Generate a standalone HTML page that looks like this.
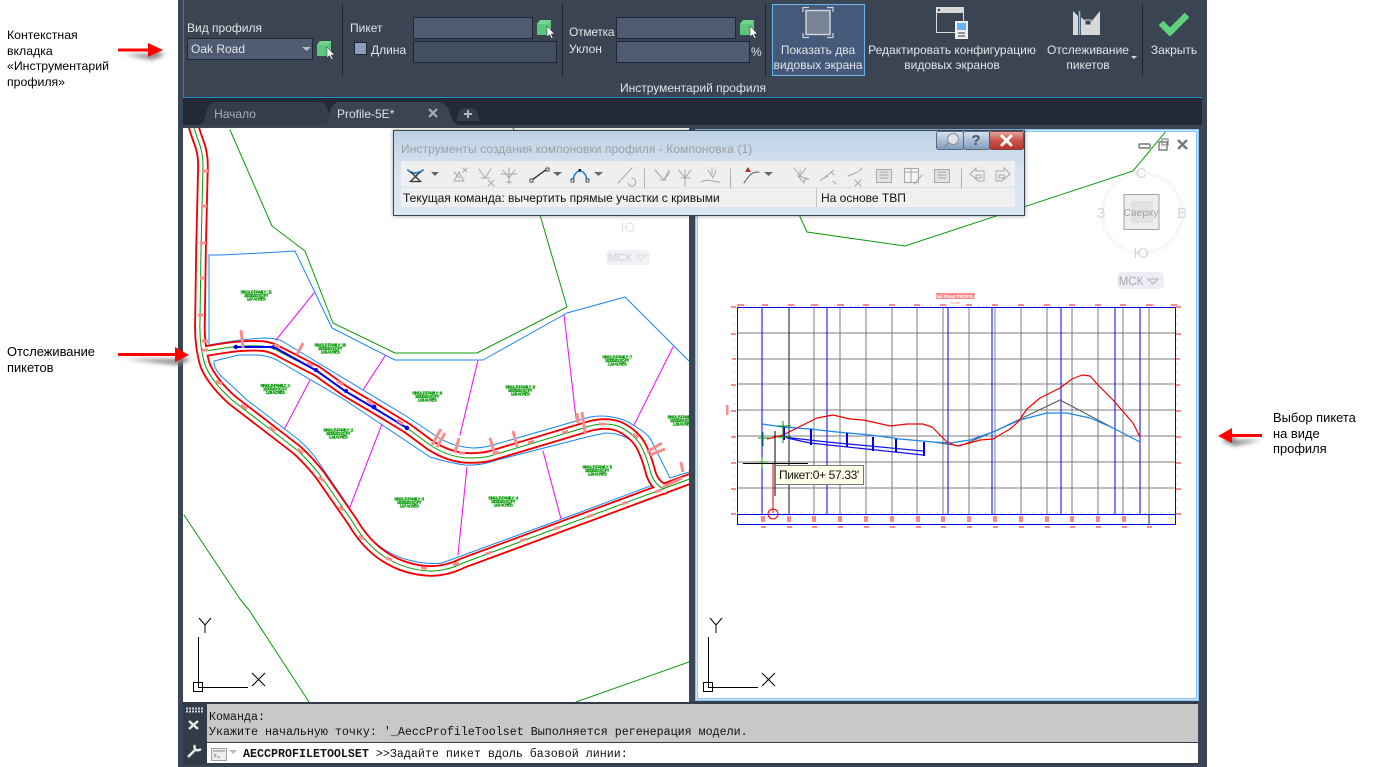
<!DOCTYPE html>
<html lang="ru"><head><meta charset="utf-8"><title>Инструментарий профиля</title>
<style>
html,body{margin:0;padding:0;background:#fff;width:1384px;height:767px;overflow:hidden}
body{position:relative;font-family:"Liberation Sans","Noto Sans CJK SC",sans-serif}
.a{position:absolute}
.t{position:absolute;white-space:nowrap;font-size:12px;line-height:14px}
.n{color:#000}
.r{color:#e2e4e8}
.c{text-align:center;transform:translateX(-50%)}
.m{position:absolute;white-space:pre;font-family:"Liberation Mono",monospace;font-size:11.67px;line-height:14px;color:#111}
svg{position:absolute;left:0;top:0}
.pl text{letter-spacing:-.5px}
</style></head><body>

<!-- window frame -->
<div class="a" style="left:178px;top:0;width:1029px;height:767px;background:#3a4556"></div>
<div class="a" style="left:183px;top:0;width:1019px;height:97px;background:#3b4453"></div>
<div class="a" style="left:183px;top:0;width:1px;height:97px;background:#1d8ec8"></div>
<div class="a" style="left:183px;top:97px;width:1019px;height:1px;background:#1d8ec8"></div>
<div class="a" style="left:183px;top:98px;width:1019px;height:27px;background:#232a36"></div>

<!-- tabs -->
<svg width="1384" height="130" style="z-index:1">
<path d="M200 125C207 124 204 102 216 102H318C326 102 327 108 329 114L333 125Z" fill="#353d4b"/>
<path d="M326 125C330 118 328 102 340 102H438C446 102 449 110 451 116C453 122 456 125 460 125Z" fill="#3b4453"/>
<path d="M457 121C459 111 459 108 466 108H472C477 108 478 114 479 121Z" fill="#353d4b"/>
<path d="M468 110V118M464 114H472" stroke="#aeb3bb" stroke-width="2"/>
<path d="M429 109L437 117M437 109L429 117" stroke="#aeb1b7" stroke-width="2"/>
</svg>

<!-- viewport backgrounds -->
<div class="a" style="left:183px;top:128px;width:506px;height:574px;background:#fff"></div>
<div class="a" style="left:695px;top:129px;width:504px;height:572px;background:#fff;box-sizing:border-box;border:3px solid #8cc3f5;outline:1px solid #d4e8fb;outline-offset:-2px"></div>

<!-- drawings -->
<svg width="1384" height="767" style="z-index:2" fill="none">
<defs>
<clipPath id="l"><rect x="183" y="128" width="506" height="574"/></clipPath>
<clipPath id="rv"><rect x="698" y="132" width="498" height="566"/></clipPath>
</defs>
<g clip-path="url(#l)" stroke-linejoin="round" stroke-linecap="round">
 <!-- green boundaries -->
 <g stroke="#0a9a0a" stroke-width="1">
 <path d="M230 130L272 226L305 251L333 323L395 353H477L567 307L540 215"/>
 <path d="M184 515L240 599L249 610L309 702"/>
 <path d="M576 702L689 662"/>
 <path d="M513 128L517 135"/>
 </g>
 <!-- blue lots -->
 <g stroke="#1a86f0" stroke-width="1">
 <path d="M209 345L209 255L220 255L262 253L295 251L332 328L395 360H483L567 313L625 297L689 361"/>
 <path d="M209 345Q240 339 265 338Q275 338 282 341L406 416L430 432Q450 447 473 448Q483 448 493 445L590 417Q602 415 612 417Q625 419 633 425Q645 432 650 438L670 478L689 472"/>
 <path d="M653 485L645 460Q640 445 630 440Q620 433 605 433L587 437L497 460Q480 466 465 465Q450 463 430 457L345 400L282 363Q270 355 255 355L239 355L214 361Q213 366 220 375L247 400L299 440Q308 448 315 457L349 507Q358 525 369 537Q385 553 405 559Q425 565 442 563L562 519Z"/>
 </g>
 <!-- magenta -->
 <g stroke="#f01af0" stroke-width="1.1">
 <path d="M314 293L276 340M310 380L285 428M385 356L363 390M382 424L350 507M478 360L460 435M564 315L576 418M673 347L634 425M467 467L458 555M543 451L561 519"/>
 </g>
 <!-- road -->
 <g stroke="#f40000" stroke-width="11.500">
  <path d="M194 128L198 140Q203 152 203 165L201 250L200 320Q199 345 205 365Q212 382 232 400L297 450Q310 462 320 475L352 521Q366 545 385 557Q405 570 430 571Q447 571 463 563L687 480L695 477"/>
  <path d="M206 351L225 348Q245 345 262 346Q272 347 280 352L317 371L345 391L374 408L407 428L430 445Q450 458 470 458Q482 458 490 456L590 426Q605 422 618 426Q632 432 640 444Q646 455 650 470Q653 484 664 489"/>
 </g>
 <g stroke="#fff" stroke-width="7.800">
  <path d="M194 128L198 140Q203 152 203 165L201 250L200 320Q199 345 205 365Q212 382 232 400L297 450Q310 462 320 475L352 521Q366 545 385 557Q405 570 430 571Q447 571 463 563L687 480L695 477"/>
  <path d="M206 351L225 348Q245 345 262 346Q272 347 280 352L317 371L345 391L374 408L407 428L430 445Q450 458 470 458Q482 458 490 456L590 426Q605 422 618 426Q632 432 640 444Q646 455 650 470Q653 484 664 489"/>
 </g>
 <g stroke="#0a9a0a" stroke-width="1">
  <path d="M194 128L198 140Q203 152 203 165L201 250L200 320Q199 345 205 365Q212 382 232 400L297 450Q310 462 320 475L352 521Q366 545 385 557Q405 570 430 571Q447 571 463 563L687 480L695 477"/>
  <path d="M206 351L225 348Q245 345 262 346Q272 347 280 352L317 371L345 391L374 408L407 428L430 445Q450 458 470 458Q482 458 490 456L590 426Q605 422 618 426Q632 432 640 444Q646 455 650 470Q653 484 664 489"/>
 </g>
 <!-- selected alignment -->
 <path d="M234 347H274L317 371L345 391L374 408L407 428" stroke="#0000e6" stroke-width="2"/>
 <g fill="#0000e6" stroke="none">
  <circle cx="236" cy="347" r="2.2"/><circle cx="274" cy="347" r="2.2"/><circle cx="316" cy="370" r="2"/><circle cx="346" cy="391" r="2"/><circle cx="374" cy="407" r="2.4"/><circle cx="407" cy="428" r="2.2"/>
 </g>
 <!-- pink ticks -->
 <g stroke="#f98c8c" stroke-width="3" stroke-linecap="butt">
  <path d="M241 330L243 348M303 343L297 355M441 429L432 445M445 433L437 447M459 438L455 453M490 438L495 455M513 431L517 447M577 413L578 423M582 412L585 433M662 443L647 452M665 449L650 455M681 462L683 472M682 478L663 487"/>
  <path d="M202 171h6M201 206h6M200 243h6M200 278h5M198 315h5M202 341h6M202 350h6M216 381l6 3M241 405l6 4M269 427l6 4M297 449l6 4M319 477l5 4M339 507l5 3M359 536l5 3M386 558l6 2M421 568h6M453 565l6 -2M486 554l6 -2M520 541l6 -2M554 529l6 -2M587 517l6 -2M622 504l6 -2M655 492l6 -2M274 345l6 2M307 362l6 4M337 381l6 4M367 400l6 4M397 420l6 4M459 453h6M493 454l6 -2M528 443l6 -2M562 433l6 -2M599 424l6 0M633 434l5 4"/>
 </g>
 <!-- parcel labels -->
 <g class="pl" fill="#0a9a0a" stroke="#0a9a0a" stroke-width=".25" font-family="Liberation Sans, sans-serif" font-size="4.2" font-weight="700" text-anchor="middle">
  <text x="256" y="293.500">SINGLE-FAMILY : 11</text><text x="256" y="297">10000.00 SQ FT</text><text x="256" y="300.500">1.07 ACRES</text>
  <text x="330" y="346.500">SINGLE-FAMILY : 10</text><text x="330" y="350">10000.00 SQ FT</text><text x="330" y="353.500">1.08 ACRES</text>
  <text x="275" y="387">SINGLE-FAMILY : 1</text><text x="275" y="390.500">10000.00 SQ FT</text><text x="275" y="394">1.08 ACRES</text>
  <text x="427" y="394.500">SINGLE-FAMILY : 9</text><text x="427" y="398">10000.00 SQ FT</text><text x="427" y="401.500">1.08 ACRES</text>
  <text x="338" y="431.500">SINGLE-FAMILY : 2</text><text x="338" y="435">10000.00 SQ FT</text><text x="338" y="438.500">1.14 ACRES</text>
  <text x="520" y="388.500">SINGLE-FAMILY : 8</text><text x="520" y="392">10000.00 SQ FT</text><text x="520" y="395.500">1.09 ACRES</text>
  <text x="617" y="358.500">SINGLE-FAMILY : 7</text><text x="617" y="362">10000.00 SQ FT</text><text x="617" y="365.500">1.14 ACRES</text>
  <text x="597" y="468.500">SINGLE-FAMILY : 5</text><text x="597" y="472">10000.00 SQ FT</text><text x="597" y="475.500">1.20 ACRES</text>
  <text x="503" y="499.500">SINGLE-FAMILY : 4</text><text x="503" y="503">10000.00 SQ FT</text><text x="503" y="506.500">1.02 ACRES</text>
  <text x="409" y="500.500">SINGLE-FAMILY : 3</text><text x="409" y="504">10000.00 SQ FT</text><text x="409" y="507.500">1.07 ACRES</text>
  <text x="682" y="418.500">SINGLE-FAMILY : 6</text><text x="682" y="422">10000.00 SQ FT</text><text x="682" y="425.500">1.18 ACRES</text>
 </g>
 <!-- ghost viewcube -->
 <text x="628" y="232" font-family="Liberation Sans, sans-serif" font-size="14" fill="#e4e4e4" stroke="none" text-anchor="middle">Ю</text>
 <rect x="606" y="250" width="44" height="15" rx="4" fill="#f1f1f6" stroke="none"/>
 <text x="620" y="261" font-family="Liberation Sans, sans-serif" font-size="11" fill="#d0d0d6" stroke="none" text-anchor="middle">МСК</text>
 <path d="M636 255l5 5l5 -5z" stroke="#dcdce4"/>
</g>

<!-- UCS left -->
<g stroke="#000" stroke-width="1">
 <path d="M198.500 637V687.500H248M193.500 682.500h9v9h-9z"/>
 <path d="M199 618l6 7l6 -7M205 625v8M252 673l13 13M265 673l-13 13"/>
 <path d="M708.500 637V687.500H758M703.500 682.500h9v9h-9z"/>
 <path d="M710 618l6 7l6 -7M716 625v8M762 673l13 13M775 673l-13 13"/>
</g>

<g clip-path="url(#rv)">
 <path d="M797 210L807 232L905 246L1133 171L1167 130" stroke="#0a9a0a" stroke-width="1"/>
 <!-- viewcube -->
 <circle cx="1142" cy="213" r="40" stroke="#f8f8f8" stroke-width="4"/>
 <rect x="1124" y="194.500" width="35" height="35" fill="#eee" stroke="#a4a4a4" stroke-width="1"/>
 <rect x="1131" y="201" width="22" height="22" fill="#e2e2e4"/>
 <g font-family="Liberation Sans, sans-serif" fill="#d5d5d5" text-anchor="middle" font-size="15">
  <text x="1141" y="178">С</text><text x="1182" y="218">В</text><text x="1141" y="258">Ю</text><text x="1101" y="218">З</text>
 </g>
 <text x="1141" y="216" font-family="Liberation Sans, sans-serif" font-size="10.500" fill="#a0a0a0" text-anchor="middle">Сверху</text>
 <rect x="1117" y="272" width="47" height="17" rx="5" fill="#ededf5"/>
 <text x="1131" y="285" font-family="Liberation Sans, sans-serif" font-size="11.500" fill="#a6a6ae" text-anchor="middle">МСК</text>
 <path d="M1148 279l5 5l5 -5z" stroke="#b4b4bc"/>
 <!-- window controls -->
 <rect x="1139" y="144" width="11" height="4" rx="1" fill="#fff" stroke="#777" stroke-width="1.4"/>
 <rect x="1159" y="142" width="8" height="8" fill="#fff" stroke="#777" stroke-width="1.4"/>
 <rect x="1162" y="139" width="6" height="6" fill="none" stroke="#888" stroke-width="1.2"/>
 <path d="M1178 140l9 9M1187 140l-9 9" stroke="#777" stroke-width="2.4"/>
</g>

<!-- profile plot -->
<g stroke-width="1" shape-rendering="crispEdges">
 <g stroke="#7c7c7c">
  <path d="M737 333H1175M737 359H1175M737 384H1175M737 410H1175M737 436H1175M737 462H1175M737 488H1175"/>
  <path d="M814 307V514M840 307V514M866 307V514M892 307V514M917 307V514M943 307V514M969 307V514M995 307V514M1021 307V514M1047 307V514M1072 307V514M1098 307V514M1123 307V514M1149 307V514"/>
 </g>
 <path d="M789 307V514" stroke="#10104a" stroke-width="1"/>
 <g stroke="#0000f0">
  <path d="M762 307V514M827 307V514M948 307V514M992 307V514M1061 307V514M1115 307V514M1140 307V514"/>
  <path d="M737.500 307.500H1175.500V524.500H737.500ZM737 514.500H1175"/>
 </g>
 <path d="M1149 514V524" stroke="#222"/>
 <!-- axis ticks pink -->
 <g stroke="#fb8c8c">
  <path d="M734 307v207M1177 307v207" stroke-dasharray="1 7"/>
  <path d="M737 512H1175" stroke-dasharray="1 7" transform="translate(0 1)"/>
  <path d="M738 306H1175" stroke-dasharray="1 7"/>
 </g>
 <g fill="#fb8c8c" stroke="none">
  <rect x="737" y="304" width="7" height="2"/><rect x="762" y="304" width="6" height="2"/><rect x="788" y="304" width="6" height="2"/><rect x="811" y="304" width="7" height="2"/><rect x="837" y="304" width="7" height="2"/><rect x="863" y="304" width="6" height="2"/><rect x="889" y="304" width="6" height="2"/><rect x="914" y="304" width="6" height="2"/><rect x="940" y="304" width="6" height="2"/><rect x="966" y="304" width="6" height="2"/><rect x="992" y="304" width="6" height="2"/><rect x="1018" y="304" width="6" height="2"/><rect x="1044" y="304" width="6" height="2"/><rect x="1069" y="304" width="6" height="2"/><rect x="1095" y="304" width="6" height="2"/><rect x="1120" y="304" width="6" height="2"/><rect x="1146" y="304" width="7" height="2"/><rect x="1171" y="304" width="6" height="2"/>
  <rect x="731" y="306" width="5" height="2"/><rect x="731" y="333" width="5" height="2"/><rect x="732" y="358" width="4" height="2"/><rect x="731" y="384" width="5" height="2"/><rect x="731" y="410" width="5" height="2"/><rect x="731" y="436" width="5" height="2"/><rect x="731" y="462" width="5" height="2"/><rect x="731" y="488" width="5" height="2"/><rect x="731" y="513" width="5" height="2"/>
  <rect x="1176" y="306" width="5" height="2"/><rect x="1176" y="333" width="5" height="2"/><rect x="1176" y="358" width="4" height="2"/><rect x="1176" y="384" width="4" height="2"/><rect x="1176" y="410" width="5" height="2"/><rect x="1176" y="436" width="5" height="2"/><rect x="1176" y="462" width="5" height="2"/><rect x="1176" y="488" width="5" height="2"/><rect x="1176" y="513" width="5" height="2"/>
  <rect x="726" y="405" width="2.500" height="10"/>
  <rect x="761" y="516" width="4" height="6"/><rect x="787" y="516" width="4" height="6"/><rect x="812" y="516" width="4" height="6"/><rect x="838" y="516" width="4" height="6"/><rect x="864" y="516" width="4" height="6"/><rect x="890" y="516" width="4" height="6"/><rect x="916" y="516" width="4" height="6"/><rect x="941" y="516" width="4" height="6"/><rect x="967" y="516" width="4" height="6"/><rect x="993" y="516" width="4" height="6"/><rect x="1019" y="516" width="4" height="6"/><rect x="1045" y="516" width="4" height="6"/><rect x="1070" y="516" width="4" height="6"/><rect x="1096" y="516" width="4" height="6"/><rect x="1122" y="516" width="4" height="6"/>
  <rect x="761" y="526" width="5" height="2"/><rect x="787" y="526" width="5" height="2"/><rect x="812" y="526" width="5" height="2"/><rect x="838" y="526" width="5" height="2"/><rect x="864" y="526" width="5" height="2"/><rect x="890" y="526" width="5" height="2"/><rect x="916" y="526" width="5" height="2"/><rect x="941" y="526" width="5" height="2"/><rect x="967" y="526" width="5" height="2"/><rect x="993" y="526" width="5" height="2"/><rect x="1019" y="526" width="5" height="2"/><rect x="1045" y="526" width="5" height="2"/><rect x="1070" y="526" width="5" height="2"/><rect x="1096" y="526" width="5" height="2"/><rect x="1122" y="526" width="5" height="2"/><rect x="1147" y="526" width="5" height="2"/>
  <rect x="936" y="293" width="39" height="6"/>
 </g>
</g>
<text x="955.500" y="298" font-family="Liberation Sans, sans-serif" font-size="4.600" fill="#fff" text-anchor="middle" font-weight="700">Oak Road PROFILE</text>
<text x="955" y="304" font-family="Liberation Sans, sans-serif" font-size="4" fill="#fb8c8c" text-anchor="middle">Scale</text>
<g stroke-linejoin="round">
 <path d="M933 442L960 446L993 432L1060 400L1113 428" stroke="#555" stroke-width="1"/>
 <path d="M762 424L783 427L810 429L837 432L870 435L900 439L933 442L950 443L970 440L993 432L1020 420L1047 413L1067 413L1090 418L1113 428L1140 442" stroke="#1a86f0" stroke-width="1.2"/>
 <path d="M767 439L783 435L797 428L817 418L833 415L850 419L863 420L877 423L890 426L907 424L923 424L932 427L947 442L957 446L970 443L980 440L993 439L1010 429L1018 422L1027 409L1040 398L1060 388L1072 379L1082 375L1090 376L1098 385L1113 400L1133 423L1140 437" stroke="#f00000" stroke-width="1.2"/>
 <path d="M783 437L827 442L923 451M787 438L810 443L923 455" stroke="#1414e6" stroke-width="1.2"/>
 <path d="M784 427V440M811 429V445M847 433V447M873 437V451M896 439V452M924 442V456" stroke="#0000e6" stroke-width="2"/>
 <path d="M758 438H769M763 432V446M777 426L791 426M783 421V443M777 437H791M757 462H768M762 457V468" stroke="#0a9a0a" stroke-width="1"/>
 <path d="M773 463V513" stroke="#e00000" stroke-width="1"/>
 <circle cx="773" cy="514" r="5" stroke="#e00000" stroke-width="1"/>
 <path d="M775 431V496M743 463.500H808" stroke="#000" stroke-width="1"/>
</g>
<!-- arrows -->
<defs><filter id="b" x="-20%" y="-100%" width="140%" height="300%"><feGaussianBlur stdDeviation="2"/></filter></defs>
<g>
 <path d="M122 53H150V48L163 54L150 59Z" fill="#888" filter="url(#b)" transform="translate(2 1)"/>
 <path d="M118 48.500h31v3h-31z" fill="#f00"/><path d="M148 43L163 50L148 57Z" fill="#f00"/>
 <path d="M122 358H176V353L189 359L176 364Z" fill="#888" filter="url(#b)" transform="translate(2 1)"/>
 <path d="M118 353h58v3h-58z" fill="#f00"/><path d="M175 347L189 355L175 362Z" fill="#f00"/>
 <path d="M1259 439H1233V434L1219 440L1233 445Z" fill="#888" filter="url(#b)" transform="translate(2 1)"/>
 <path d="M1232 434h30v3h-30z" fill="#f00"/><path d="M1232 428L1218 436L1232 443Z" fill="#f00"/>
</g>
</svg>

<!-- tooltip -->
<div class="t" style="z-index:3;left:775px;top:465px;height:18px;background:#fffee8;border:1px solid #7b7b7b;line-height:18px;padding-left:3px;width:84px;color:#111;letter-spacing:-.35px">Пикет:0+ 57.33'</div>

<!-- toolset window -->
<div class="a" style="z-index:4;left:393px;top:130px;width:630px;height:84px;box-sizing:content-box;border:1px solid #3c4450;background:linear-gradient(#bcd0e4,#d6e4f2 40px,#dbe7f4);box-shadow:0 0 4px rgba(60,60,60,.5)"></div>
<div class="t" style="z-index:5;left:401px;top:142px;color:#9c9fa3;font-size:12px;letter-spacing:.08px">Инструменты создания компоновки профиля - Компоновка (1)</div>
<div class="a" style="z-index:5;left:401px;top:161px;width:614px;height:26px;background:#efefef"></div>
<div class="a" style="z-index:5;left:401px;top:188px;width:614px;height:19px;background:#f0f0f0"></div>
<div class="a" style="z-index:5;left:816px;top:188px;width:1px;height:19px;background:#c6c6c6"></div>
<div class="t" style="z-index:6;left:403px;top:191px;color:#111">Текущая команда: вычертить прямые участки с кривыми</div>
<div class="t" style="z-index:6;left:821px;top:191px;color:#111">На основе ТВП</div>

<svg width="1384" height="767" style="z-index:7" fill="none" stroke-linecap="round">
 <!-- title buttons -->
 <defs>
  <linearGradient id="gb" x1="0" y1="0" x2="0" y2="1"><stop offset="0" stop-color="#d8e4f0"/><stop offset=".5" stop-color="#a9bed5"/><stop offset="1" stop-color="#7f9cbc"/></linearGradient>
  <linearGradient id="gr" x1="0" y1="0" x2="0" y2="1"><stop offset="0" stop-color="#e6a69c"/><stop offset=".5" stop-color="#c8574a"/><stop offset="1" stop-color="#b8332a"/></linearGradient>
 </defs>
 <rect x="936.500" y="131.500" width="27" height="18" rx="2" fill="url(#gb)" stroke="#5a6a7c"/>
 <rect x="963.500" y="131.500" width="26" height="18" rx="2" fill="url(#gb)" stroke="#5a6a7c"/>
 <rect x="989.500" y="131.500" width="34" height="18" rx="2" fill="url(#gr)" stroke="#6e4a48"/>
 <circle cx="953" cy="139" r="5.500" fill="#dfe3e8" stroke="#8a8f96"/><path d="M949 143L944 147" stroke="#8a8f96" stroke-width="1.500"/>
 <text x="976" y="145" font-family="Liberation Sans, sans-serif" font-size="15" font-weight="700" fill="#4a5564" text-anchor="middle">?</text>
 <path d="M1002 136L1011 145M1011 136L1002 145" stroke="#fff" stroke-width="3"/>
 <!-- separators -->
 <path d="M644.500 169V188M730.500 169V188M961.500 169V188" stroke="#b0b0b0" stroke-width="1"/>
 <!-- active icons -->
 <path d="M408 170C411 174 419 174 423 170" stroke="#3a8fd0" stroke-width="2"/>
 <path d="M411 172L420 181M420 172L411 181M410 181.500H421" stroke="#333" stroke-width="1.300"/>
 <path d="M431 172h8l-4 4z" fill="#666"/>
 <path d="M532 180L547 169" stroke="#222" stroke-width="1.300"/><rect x="530" y="179" width="3" height="3" fill="#fff" stroke="#222" stroke-width=".8"/><rect x="546" y="168" width="3" height="3" fill="#fff" stroke="#222" stroke-width=".8"/>
 <path d="M553 172h9l-4.500 4z" fill="#666"/>
 <path d="M573 180C575 168 585 168 587 180" stroke="#1a86e0" stroke-width="1.600"/><rect x="571" y="179" width="3" height="3" fill="#fff" stroke="#222" stroke-width=".8"/><rect x="586" y="179" width="3" height="3" fill="#fff" stroke="#222" stroke-width=".8"/><rect x="578.500" y="169" width="2.500" height="2.500" fill="#222"/>
 <path d="M594 172h9l-4.500 4z" fill="#666"/>
 <path d="M744 183C750 174 752 172 759 172" stroke="#555" stroke-width="1"/><path d="M745 172l3 -5l3 5z" fill="#b03030"/>
 <path d="M764 172h9l-4.500 4z" fill="#666"/>
 <!-- disabled icons -->
 <g stroke="#a8a8a8" stroke-width="1">
  <path d="M454 181H464L459 172ZM454 172L460 178M463 168l4 4M467 168l-4 4"/>
  <path d="M479 169L485 178M491 169L485 178M481 178H490M488 180l6 6M494 180l-6 6"/>
  <path d="M501 174H517M509 168V184M503 170L509 178L515 170M506 182H512"/>
  <path d="M618 183L632 168M632 178a4 4 0 1 1 -4 5"/>
  <path d="M655 170L664 180M669 170L664 180M660 180h6M670 172l-6 8"/>
  <path d="M679 170L685 178L691 170M685 170V186M681 178H690"/>
  <path d="M701 182C708 178 712 182 720 182M708 170l5 8M716 170l-3 8M712 168v6"/>
  <path d="M794 168L800 176L806 168M800 170V176M798 176l6 7l1 -4l4 0z"/>
  <path d="M820 181L834 170M824 178l4 -2M831 172l3 3M833 181l3 3"/>
  <path d="M848 176L858 172M855 180l6 6M861 180l-6 6M862 168l-3 3"/>
  <rect x="876.500" y="169.500" width="15" height="13" fill="#e2e2e2"/><path d="M880 172H888M880 175H888M880 178H888"/>
  <rect x="904.500" y="168.500" width="14" height="14" fill="#f4f4f4"/><path d="M905 172H918M911 168V183M914 184L922 175"/>
  <rect x="934.500" y="169.500" width="15" height="13" fill="#e2e2e2"/><path d="M938 172H946M938 175H946M938 178H946"/>
  <path d="M970 174L976 168V171H984V181H978L975 178H981V175H976V179Z"/>
  <path d="M1010 174L1004 168V171H996V181H1002L1005 178H999V175H1004V179Z"/>
 </g>
</svg>

<!-- ribbon controls -->
<div class="a" style="z-index:2;left:342px;top:3px;width:1px;height:74px;background:#1f2632"></div>
<div class="a" style="z-index:2;left:562px;top:3px;width:1px;height:74px;background:#1f2632"></div>
<div class="a" style="z-index:2;left:765px;top:3px;width:1px;height:74px;background:#1f2632"></div>
<div class="a" style="z-index:2;left:1142px;top:3px;width:1px;height:74px;background:#1f2632"></div>

<div class="t r" style="z-index:3;left:187px;top:21px">Вид профиля</div>
<div class="a" style="z-index:2;left:187px;top:38px;width:126px;height:22px;box-sizing:border-box;background:#4e5b70;border:1px solid #1f2735"></div>
<div class="t r" style="z-index:3;left:191px;top:42px">Oak Road</div>
<div class="t r" style="z-index:3;left:350px;top:21px">Пикет</div>
<div class="a" style="z-index:2;left:413px;top:17px;width:120px;height:22px;box-sizing:border-box;background:#4e5b70;border:1px solid #1f2735"></div>
<div class="a" style="z-index:2;left:354px;top:42px;width:13px;height:13px;box-sizing:border-box;background:#8a9dbc;border:1px solid #1f2735"></div>
<div class="t r" style="z-index:3;left:371px;top:43px">Длина</div>
<div class="a" style="z-index:2;left:413px;top:41px;width:144px;height:22px;box-sizing:border-box;background:#434e60;border:1px solid #1f2735"></div>
<div class="t r" style="z-index:3;left:569px;top:25px;letter-spacing:-.25px">Отметка</div>
<div class="a" style="z-index:2;left:616px;top:17px;width:120px;height:22px;box-sizing:border-box;background:#4e5b70;border:1px solid #1f2735"></div>
<div class="t r" style="z-index:3;left:569px;top:42px">Уклон</div>
<div class="a" style="z-index:2;left:616px;top:41px;width:134px;height:22px;box-sizing:border-box;background:#4e5b70;border:1px solid #1f2735"></div>
<div class="t r" style="z-index:3;left:751px;top:45px">%</div>
<div class="a" style="z-index:2;left:772px;top:4px;width:93px;height:72px;box-sizing:border-box;background:#45597a;border:1px solid #6bb5ea"></div>

<div class="t r c" style="z-index:3;left:818px;top:43px">Показать два</div>
<div class="t r c" style="z-index:3;left:818px;top:58px">видовых экрана</div>
<div class="t r c" style="z-index:3;left:952px;top:43px">Редактировать конфигурацию</div>
<div class="t r c" style="z-index:3;left:952px;top:58px">видовых экранов</div>
<div class="t r c" style="z-index:3;left:1088px;top:43px">Отслеживание</div>
<div class="t r c" style="z-index:3;left:1088px;top:58px">пикетов</div>
<div class="t r c" style="z-index:3;left:1174px;top:43px">Закрыть</div>
<div class="t r c" style="z-index:3;left:693px;top:81px">Инструментарий профиля</div>

<div class="t c" style="z-index:3;left:235px;top:107px;color:#a9adb4">Начало</div>
<div class="t" style="z-index:3;left:337px;top:107px;color:#dfe1e5">Profile-5E*</div>

<svg width="1384" height="100" style="z-index:3" fill="none">
 <defs><g id="cube"><path d="M0 4L3 0H14V12L12 15H0Z" fill="#5cc77c"/><path d="M0 4H11L14 0H3ZM11 4V15" fill="#7ddb98" fill-opacity=".7"/><path d="M10 6V17L12.500 14.500L14.500 18.500L16 18L14.200 14H17.500Z" fill="#fff" stroke="#222" stroke-width=".5"/></g></defs>
 <use href="#cube" x="317" y="41"/><use href="#cube" x="537" y="20"/><use href="#cube" x="740" y="20"/>
 <path d="M302 47h9l-4.500 4z" fill="#b8bcc4"/>
 <!-- two viewports icon -->
 <rect x="806" y="10.500" width="24" height="24" fill="#768496" stroke="#cfd3d9" stroke-width="1.500"/>
 <path d="M803 12V7.500H809M827 7.500H833V12M803 33V37.500H809M827 37.500H833V33" stroke="#cfd3d9" stroke-width="1.200"/>
 <!-- edit viewport config -->
 <rect x="936.500" y="7.500" width="27" height="25" stroke="#d8d8d8"/>
 <rect x="936" y="7" width="28" height="6" fill="#d8d8d8"/>
 <rect x="938" y="9" width="2" height="2" fill="#333"/>
 <rect x="955" y="21" width="13" height="18" fill="#eee"/>
 <rect x="957" y="23" width="9" height="7" fill="#62b4f6"/>
 <path d="M958 33h7M958 36h7" stroke="#333"/>
 <!-- station tracking -->
 <path d="M1073 11L1078 16V35H1073ZM1081 17L1086 22H1091L1100 11V35H1081Z" fill="#d8d8d8"/>
 <path d="M1079.500 11V35" stroke="#7cc4f4" stroke-width="1.500"/>
 <rect x="1085" y="20" width="6" height="5" fill="#3b4453" stroke="#d8d8d8"/>
 <path d="M1131 56h6l-3 3z" fill="#cfd3d9"/>
 <!-- check -->
 <path d="M1161 23L1170 32L1187 15" stroke="#5dd37e" stroke-width="6.500" fill="none"/>
</svg>

<!-- command line -->
<div class="a" style="z-index:2;left:183px;top:702px;width:1015px;height:63px;background:#333b49"></div>
<div class="a" style="z-index:3;left:207px;top:704px;width:991px;height:38px;background:#c8c8c8"></div>
<div class="a" style="z-index:3;left:207px;top:743px;width:991px;height:20px;background:#fff"></div>
<div class="m" style="z-index:4;left:209px;top:710px">Команда:</div>
<div class="m" style="z-index:4;left:209px;top:725px">Укажите начальную точку: '_AeccProfileToolset Выполняется регенерация модели.</div>
<div class="m" style="z-index:4;left:243px;top:747px"><b>AECCPROFILETOOLSET</b> &gt;&gt;Задайте пикет вдоль базовой линии:</div>
<svg width="1384" height="767" style="z-index:4" fill="none">
 <path d="M186 708.500h17M186 711.500h17" stroke="#d0d3d8" stroke-width="2" stroke-dasharray="2 1"/>
 <path d="M189 721L198 729M198 721L189 729" stroke="#e8e8e8" stroke-width="2.500"/>
 <path d="M188 757L196 749M195 745C193 749 197 752 201 749" stroke="#e8e8e8" stroke-width="2.500"/>
 <rect x="211.500" y="748.500" width="15" height="12" fill="#eee" stroke="#a0a0a0"/>
 <path d="M213 751h12" stroke="#bbb" stroke-width="2"/><path d="M214 754l2 1.500l-2 1.500M217 757h3" stroke="#888"/>
 <path d="M229 750h8l-4 4z" fill="#b8b8b8"/>
</svg>

<!-- annotations -->
<div class="t n" style="left:7px;top:28px;line-height:15.700px;font-size:12.300px">Контекстная<br>вкладка<br>«Инструментарий<br>профиля»</div>
<div class="t n" style="left:7px;top:344px;line-height:15.500px;font-size:12.900px">Отслеживание<br>пикетов</div>
<div class="t n" style="left:1273px;top:410px;line-height:15.500px;font-size:12.900px">Выбор пикета<br>на виде<br>профиля</div>
</body></html>
